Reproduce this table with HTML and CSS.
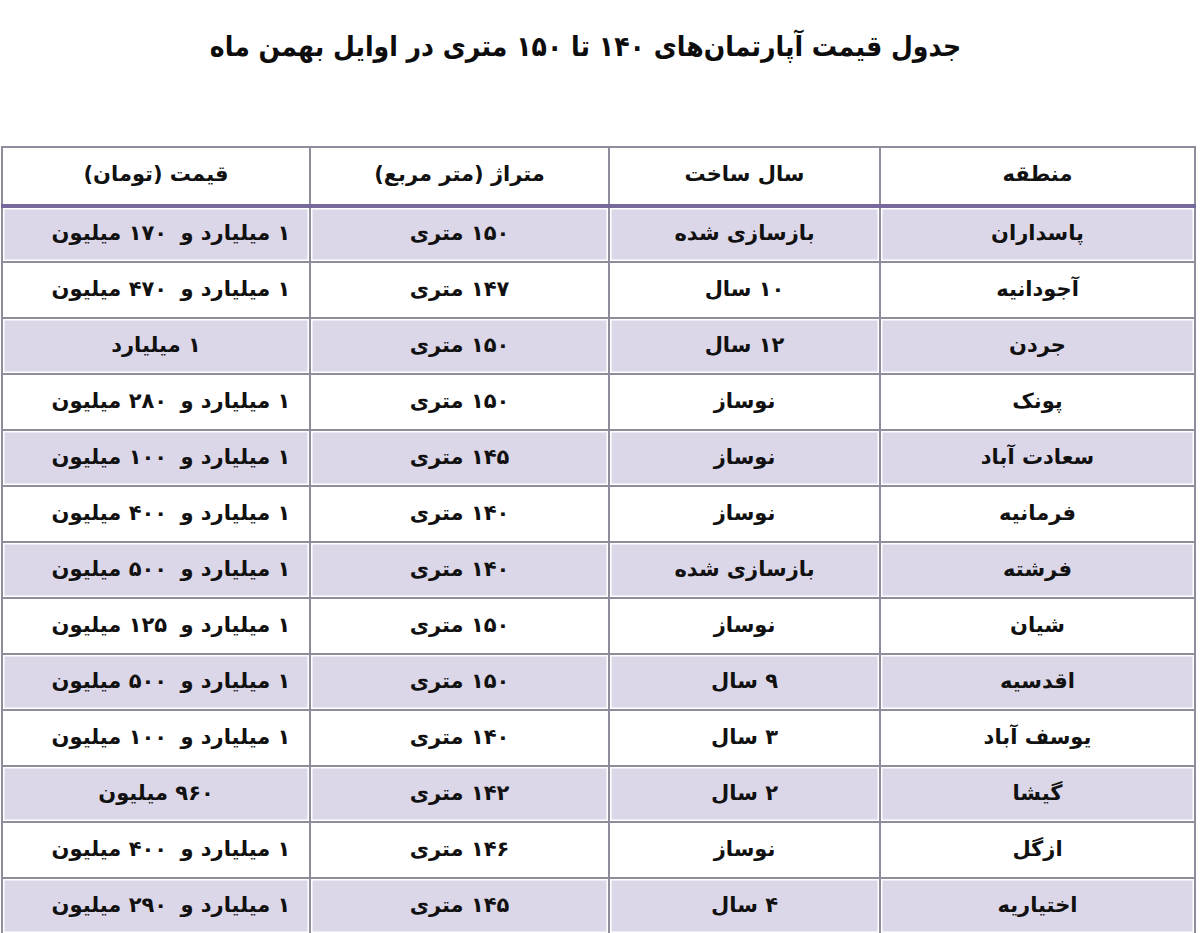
FILE: index.html
```html
<!DOCTYPE html>
<html lang="fa" dir="rtl">
<head>
<meta charset="utf-8">
<title>جدول قیمت آپارتمان‌ها</title>
<link rel="stylesheet" href="styles.css">
</head>
<body>
<div class="page">
  <h1 class="title">جدول قیمت آپارتمان‌های ۱۴۰ تا ۱۵۰ متری در اوایل بهمن ماه</h1>
  <table class="prices">
    <colgroup>
      <col class="c-area"><col class="c-year"><col class="c-size"><col class="c-price">
    </colgroup>
    <thead>
      <tr><th>منطقه</th><th>سال ساخت</th><th>متراژ (متر مربع)</th><th>قیمت (تومان)</th></tr>
    </thead>
    <tbody>
      <tr class="odd"><td>پاسداران</td><td>بازسازی شده</td><td>۱۵۰ متری</td><td class="long">۱ میلیارد و <span class="num">۱۷۰</span> میلیون</td></tr>
      <tr><td>آجودانیه</td><td>۱۰ سال</td><td>۱۴۷ متری</td><td class="long">۱ میلیارد و <span class="num">۴۷۰</span> میلیون</td></tr>
      <tr class="odd"><td>جردن</td><td>۱۲ سال</td><td>۱۵۰ متری</td><td>۱ میلیارد</td></tr>
      <tr><td>پونک</td><td>نوساز</td><td>۱۵۰ متری</td><td class="long">۱ میلیارد و <span class="num">۲۸۰</span> میلیون</td></tr>
      <tr class="odd"><td>سعادت آباد</td><td>نوساز</td><td>۱۴۵ متری</td><td class="long">۱ میلیارد و <span class="num">۱۰۰</span> میلیون</td></tr>
      <tr><td>فرمانیه</td><td>نوساز</td><td>۱۴۰ متری</td><td class="long">۱ میلیارد و <span class="num">۴۰۰</span> میلیون</td></tr>
      <tr class="odd"><td>فرشته</td><td>بازسازی شده</td><td>۱۴۰ متری</td><td class="long">۱ میلیارد و <span class="num">۵۰۰</span> میلیون</td></tr>
      <tr><td>شیان</td><td>نوساز</td><td>۱۵۰ متری</td><td class="long">۱ میلیارد و <span class="num">۱۲۵</span> میلیون</td></tr>
      <tr class="odd"><td>اقدسیه</td><td>۹ سال</td><td>۱۵۰ متری</td><td class="long">۱ میلیارد و <span class="num">۵۰۰</span> میلیون</td></tr>
      <tr><td>یوسف آباد</td><td>۳ سال</td><td>۱۴۰ متری</td><td class="long">۱ میلیارد و <span class="num">۱۰۰</span> میلیون</td></tr>
      <tr class="odd"><td>گیشا</td><td>۲ سال</td><td>۱۴۲ متری</td><td>۹۶۰ میلیون</td></tr>
      <tr><td>ازگل</td><td>نوساز</td><td>۱۴۶ متری</td><td class="long">۱ میلیارد و <span class="num">۴۰۰</span> میلیون</td></tr>
      <tr class="odd"><td>اختیاریه</td><td>۴ سال</td><td>۱۴۵ متری</td><td class="long">۱ میلیارد و <span class="num">۲۹۰</span> میلیون</td></tr>
    </tbody>
  </table>
</div>
</body>
</html>
```

FILE: styles.css
```css
* { box-sizing: border-box; }
html, body {
  margin: 0;
  padding: 0;
  background: #ffffff;
}
body {
  font-family: "DejaVu Sans", "Noto Sans", sans-serif;
  color: #111111;
}
.page {
  width: 1200px;
  height: 933px;
  overflow: hidden;
  padding: 27px 4px 0 3px;
}
.title {
  margin: 0;
  text-align: center;
  font-family: "DejaVu Sans Condensed", "DejaVu Sans", sans-serif;
  font-weight: bold;
  font-size: 28px;
  line-height: 40px;
  padding-right: 28px;
  color: #0d0d0d;
}
.prices {
  margin-top: 79px;
  width: 1193px;
  border-collapse: collapse;
  table-layout: fixed;
  border: 2px solid #8f8c9c;
}
.c-area { width: 315px; }
.c-year { width: 271px; }
.c-size { width: 299px; }
.c-price { width: 308px; }
.prices th,
.prices td {
  border: 2px solid #8f8c9c;
  text-align: center;
  font-weight: bold;
  font-size: 21px;
  color: #111111;
  padding: 0 6px;
  box-shadow: inset 0 0 0 1.5px #ffffff;
}
.prices th {
  height: 59px;
  padding-bottom: 4px;
  background: #ffffff;
  border-bottom: 4px solid #76699c;
}
.prices td {
  height: 56px;
  padding-bottom: 3px;
  background: #ffffff;
}
.prices td.long {
  padding-left: 36px;
}
.prices td .num {
  margin-right: 6px;
}
.prices tr.odd td {
  background: #dcd7e8;
}
```
